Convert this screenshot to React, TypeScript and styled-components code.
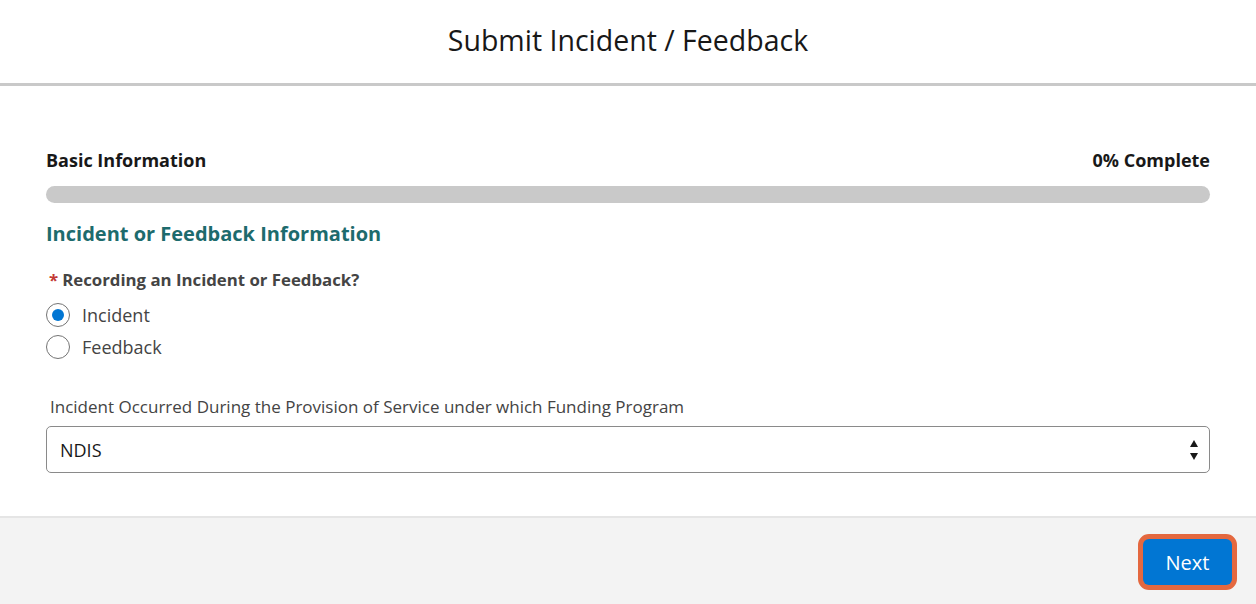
import React from "react";
import styled, { createGlobalStyle } from "styled-components";

const GlobalStyle = createGlobalStyle`
  *, *::before, *::after {
    box-sizing: border-box;
  }
  html, body {
    margin: 0;
    padding: 0;
    background: #ffffff;
    font-family: "Open Sans", "Noto Sans", sans-serif;
  }
`;

const Page = styled.div`
  width: 1256px;
  height: 604px;
  display: flex;
  flex-direction: column;
  overflow: hidden;
`;

const Header = styled.header`
  height: 86px;
  padding-bottom: 3px;
  border-bottom: 3px solid #c9c9c9;
  display: flex;
  align-items: center;
  justify-content: center;
`;

const Title = styled.h1`
  margin: 0;
  font-size: 28.5px;
  font-weight: 400;
  color: #181818;
`;

const Body = styled.main`
  flex: 1;
  padding: 62px 46px 0;
  display: flex;
  flex-direction: column;
`;

const ProgressHead = styled.div`
  display: flex;
  justify-content: space-between;
  font-size: 18px;
  font-weight: 700;
  line-height: 24px;
  color: #181818;
`;

const ProgressTrack = styled.div`
  margin-top: 14px;
  height: 17px;
  border-radius: 9px;
  background: #c9c9c9;
`;

const SectionTitle = styled.h2`
  margin: 16px 0 0;
  font-size: 20px;
  font-weight: 700;
  line-height: 30px;
  color: #1d6b6d;
`;

const FieldLabel = styled.div<{ $bold?: boolean }>`
  margin-top: ${(p) => (p.$bold ? "19px" : "36px")};
  padding-left: ${(p) => (p.$bold ? "3px" : "4px")};
  font-size: ${(p) => (p.$bold ? "16.8px" : "17px")};
  font-weight: ${(p) => (p.$bold ? 700 : 400)};
  line-height: 24px;
  color: #444444;
`;

const Required = styled.abbr`
  color: #c23934;
  text-decoration: none;
  margin-right: 4px;
`;

const RadioList = styled.div`
  margin-top: 11px;
  display: flex;
  flex-direction: column;
  gap: 8px;
`;

const RadioRow = styled.label`
  display: flex;
  align-items: center;
  gap: 12px;
  height: 24px;
  font-size: 18px;
  color: #444444;
`;

const RadioCircle = styled.span<{ $checked?: boolean }>`
  width: 24px;
  height: 24px;
  border-radius: 50%;
  border: 1px solid #747474;
  background: #ffffff;
  display: flex;
  align-items: center;
  justify-content: center;

  &::after {
    content: "";
    width: 12px;
    height: 12px;
    border-radius: 50%;
    background: ${(p) => (p.$checked ? "#0176d3" : "transparent")};
  }
`;

const Select = styled.div`
  margin-top: 7px;
  height: 47px;
  border: 1px solid #8a8a8a;
  border-radius: 5px;
  display: flex;
  align-items: center;
  justify-content: space-between;
  padding: 0 11px 0 13px;
  font-size: 18px;
  color: #181818;
`;

const Arrows = styled.div`
  display: flex;
  flex-direction: column;
  gap: 6px;
`;

const Footer = styled.footer`
  height: 88px;
  border-top: 2px solid #e5e5e5;
  background: #f3f3f3;
  display: flex;
  justify-content: flex-end;
  align-items: flex-start;
  padding: 16px 19px 0 0;
`;

const NextButton = styled.button`
  width: 99px;
  height: 56px;
  padding: 0;
  border: 5px solid #e4683f;
  border-radius: 11px;
  background: #e4683f;
  cursor: pointer;
`;

const ButtonFace = styled.span`
  display: flex;
  align-items: center;
  justify-content: center;
  width: 100%;
  height: 100%;
  border-radius: 6px;
  background: #0176d3;
  color: #ffffff;
  font-family: "Open Sans", "Noto Sans", sans-serif;
  font-size: 20px;
`;

const Triangle = ({ up }: { up?: boolean }) => (
  <svg width="8" height="7" viewBox="0 0 8 7">
    <path d={up ? "M4 0 L8 7 L0 7 Z" : "M0 0 L8 0 L4 7 Z"} fill="#181818" />
  </svg>
);

const App: React.FC = () => (
  <>
    <GlobalStyle />
    <Page>
      <Header>
        <Title>Submit Incident / Feedback</Title>
      </Header>
      <Body>
        <ProgressHead>
          <span>Basic Information</span>
          <span>0% Complete</span>
        </ProgressHead>
        <ProgressTrack />
        <SectionTitle>Incident or Feedback Information</SectionTitle>
        <FieldLabel $bold>
          <Required title="required">*</Required>
          Recording an Incident or Feedback?
        </FieldLabel>
        <RadioList>
          <RadioRow>
            <RadioCircle $checked />
            Incident
          </RadioRow>
          <RadioRow>
            <RadioCircle />
            Feedback
          </RadioRow>
        </RadioList>
        <FieldLabel>
          Incident Occurred During the Provision of Service under which Funding Program
        </FieldLabel>
        <Select>
          <span>NDIS</span>
          <Arrows>
            <Triangle up />
            <Triangle />
          </Arrows>
        </Select>
      </Body>
      <Footer>
        <NextButton>
          <ButtonFace>Next</ButtonFace>
        </NextButton>
      </Footer>
    </Page>
  </>
);

export default App;
